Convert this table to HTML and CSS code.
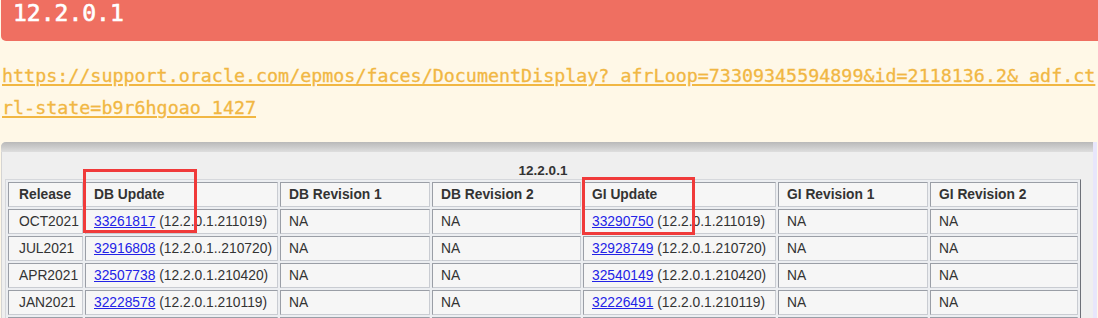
FILE: index.html
```html
<!DOCTYPE html>
<html lang="en">
<head>
<meta charset="utf-8">
<title>12.2.0.1</title>
<link rel="stylesheet" href="styles.css">
</head>
<body>
<div class="page">
  <h2 class="title">12.2.0.1</h2>
  <p class="link-line"><a class="doc-link" href="#">https://support.oracle.com/epmos/faces/DocumentDisplay?_afrLoop=73309345594899&amp;id=2118136.2&amp;_adf.ctrl-state=b9r6hgoao_1427</a></p>
  <div class="shot">
    <div class="shot-main">
      <div class="shot-bar"></div>
      <table class="patch-table">
        <caption>12.2.0.1</caption>
        <thead>
          <tr>
            <th class="c1">Release</th>
            <th class="c2">DB Update</th>
            <th class="c3">DB Revision 1</th>
            <th class="c4">DB Revision 2</th>
            <th class="c5">GI Update</th>
            <th class="c6">GI Revision 1</th>
            <th class="c7">GI Revision 2</th>
          </tr>
        </thead>
        <tbody>
          <tr>
            <td>OCT2021</td>
            <td><a href="#">33261817</a> (12.2.0.1.211019)</td>
            <td>NA</td><td>NA</td>
            <td><a href="#">33290750</a> (12.2.0.1.211019)</td>
            <td>NA</td><td>NA</td>
          </tr>
          <tr>
            <td>JUL2021</td>
            <td><a href="#">32916808</a> (12.2.0.1..210720)</td>
            <td>NA</td><td>NA</td>
            <td><a href="#">32928749</a> (12.2.0.1.210720)</td>
            <td>NA</td><td>NA</td>
          </tr>
          <tr>
            <td>APR2021</td>
            <td><a href="#">32507738</a> (12.2.0.1.210420)</td>
            <td>NA</td><td>NA</td>
            <td><a href="#">32540149</a> (12.2.0.1.210420)</td>
            <td>NA</td><td>NA</td>
          </tr>
          <tr>
            <td>JAN2021</td>
            <td><a href="#">32228578</a> (12.2.0.1.210119)</td>
            <td>NA</td><td>NA</td>
            <td><a href="#">32226491</a> (12.2.0.1.210119)</td>
            <td>NA</td><td>NA</td>
          </tr>
          <tr class="row-cut">
            <td></td><td></td><td></td><td></td><td></td><td></td><td></td>
          </tr>
        </tbody>
      </table>
      <div class="mark mark-db"></div>
      <div class="mark mark-gi"></div>
    </div>
    <div class="shot-edge"></div>
  </div>
</div>
</body>
</html>
```

FILE: styles.css
```css
html, body {
  margin: 0;
  padding: 0;
  overflow: hidden;
  background: #fff8e7;
}

.page {
  width: 1098px;
}

.title {
  margin: 0 0 0 1px;
  height: 41px;
  box-sizing: border-box;
  padding: 0 0 0 12px;
  background: #ef6f61;
  border-bottom-left-radius: 5px;
  color: #ffffff;
  font-family: "DejaVu Sans Mono", "Liberation Mono", monospace;
  font-size: 23px;
  font-weight: normal;
  line-height: 27px;
  -webkit-text-stroke: 0.6px #ffffff;
}

.link-line {
  margin: 19px 0 0 0;
  padding-left: 2px;
  font-family: "DejaVu Sans Mono", "Liberation Mono", monospace;
  font-size: 18.35px;
  line-height: 32px;
  word-break: break-all;
}

.doc-link {
  color: #f1b743;
  text-decoration: underline;
  text-decoration-thickness: 2px;
  text-underline-offset: 2px;
  -webkit-text-stroke: 0.3px #f1b743;
}

.shot {
  margin: 18px 0 0 1px;
  display: flex;
  width: 1096px;
}

.shot-main {
  position: relative;
  flex: 1;
  background: #efefef;
  border-left: 1px solid #d4d4d4;
  border-top-left-radius: 5px;
  padding: 0 0 0 3px;
  height: 200px;
}

.shot-bar {
  height: 10px;
  margin-left: -4px;
  border-top-left-radius: 5px;
  background: linear-gradient(#b9b9b9, #dedede);
  margin-bottom: 11px;
}

.shot-edge {
  width: 4px;
  background: #e8e6fb;
}

.patch-table {
  width: 1076px;
  table-layout: fixed;
  border-collapse: separate;
  border-spacing: 2px;
  border: 1px solid;
  border-color: #d6d8dc #6d7078 #6d7078 #d6d8dc;
  background: #eceef1;
  font-family: "Liberation Sans", Arial, sans-serif;
  font-size: 13.8px;
  color: #333333;
}

.patch-table caption {
  font-weight: bold;
  font-size: 13.5px;
  line-height: 16px;
  color: #333333;
  text-align: center;
}

.patch-table th,
.patch-table td {
  box-sizing: border-box;
  padding: 4px 8px;
  line-height: 15px;
  height: 25px;
  text-align: left;
  white-space: nowrap;
  overflow: hidden;
  background: #f6f6f6;
  border: 1px solid;
  border-color: #9a9ea6 #c9ccd2 #c9ccd2 #9a9ea6;
}

.patch-table th {
  font-weight: bold;
}

.patch-table th:first-child,
.patch-table td:first-child {
  padding-left: 10px;
}

.patch-table a {
  color: #2323e6;
  text-decoration: underline;
}

.c1 { width: 75px; }
.c2 { width: 193px; }
.c3 { width: 150px; }
.c4 { width: 149px; }
.c5 { width: 193px; }
.c6 { width: 150px; }
.c7 { width: 148px; }

.mark {
  position: absolute;
  border: 3px solid #f03a3a;
  box-sizing: border-box;
}

.mark-db {
  left: 81px;
  top: 27px;
  width: 114px;
  height: 64px;
}

.mark-gi {
  left: 580px;
  top: 35px;
  width: 113px;
  height: 58px;
}
```
